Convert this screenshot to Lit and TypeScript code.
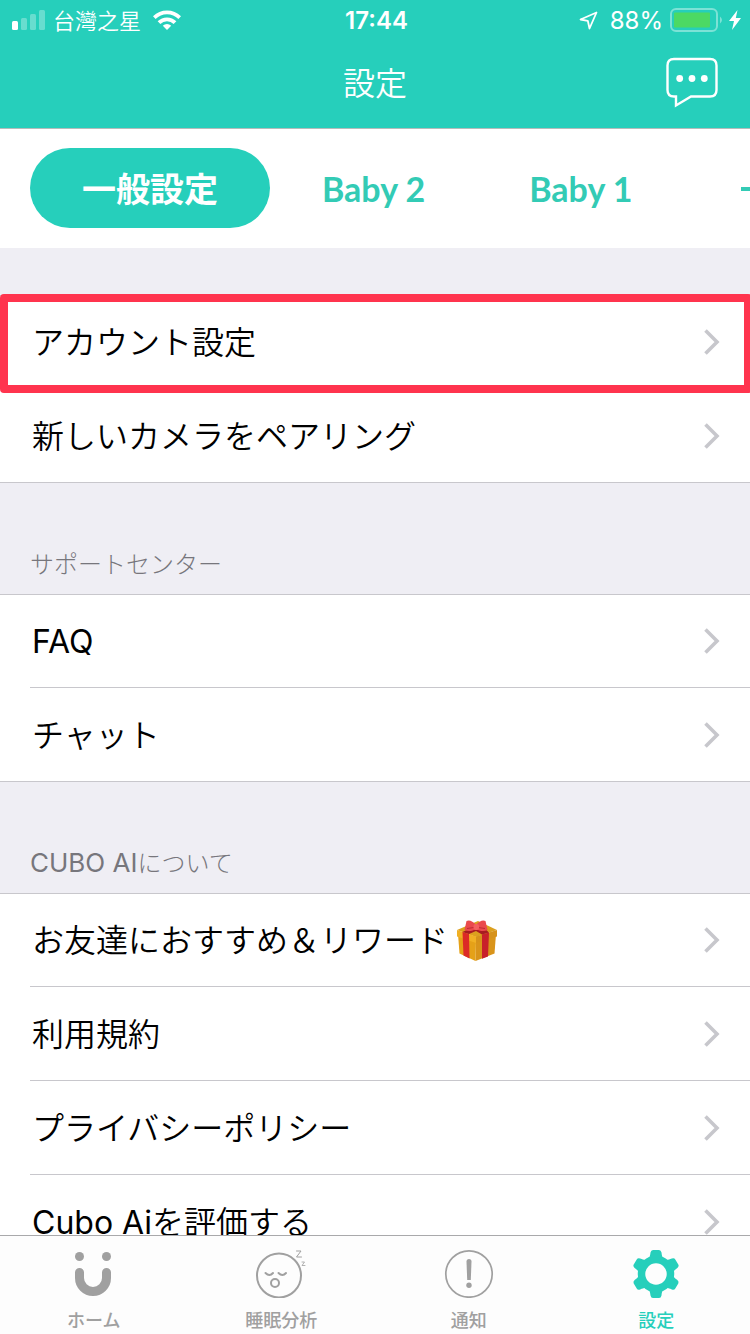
import { LitElement, html, css, svg, nothing } from "lit";
import { customElement, property, state } from "lit/decorators.js";

const gift = html`<svg class="gift" viewBox="0 0 42 42" role="img" aria-label="gift">
  <path d="M2 14 20 21 19.500 41 3.500 33.500Z" fill="#e5a118" />
  <path d="M20 21 40 14 38.500 33.500 19.500 41Z" fill="#d9941a" />
  <path d="M1 10 22 1 41 10 20 17Z" fill="#dca01f" />
  <path d="M1 10 20 16.500 V23 L1 16.500Z" fill="#f0b024" />
  <path d="M20 16.500 41 10 V16.500 L20 23Z" fill="#d6921b" />
  <path d="M6.500 12 13 14 13.500 38.500 7.500 35.500Z" fill="#dc2a26" />
  <path d="M26 14.500 33 12.500 32 36.500 26 38.800Z" fill="#c8202a" />
  <path d="M6.500 12 19 6 26 6 33 12.500 26 14.500 20 11 13 14Z" fill="#a81c20" />
  <path d="M20 5 C17 1 13 -0.500 10.500 1 C10 4 9 7 8.500 10 C12 12 17 11 20 9Z" fill="#ea4a4d" />
  <path d="M20 5 C23 1 27 -0.500 29.500 1 C30 4 31 7 31.500 10 C28 12 23 11 20 9Z" fill="#ea4a4d" />
  <path d="M11 8.500 18 7.500 M22 7.500 29 8.500" stroke="#c12a33" stroke-width="1" />
  <rect x="17.500" y="4" width="5.500" height="6" rx="2" fill="#f4615f" />
</svg>`;

const tooth = "M-8.500 -14 C-6 -17 -6 -18 -5.500 -21.500 Q-5 -24 -3 -24 H3 Q5 -24 5.500 -21.500 C6 -18 6 -17 8.500 -14Z";

const icons = {
  home: html`<svg class="icon" viewBox="0 0 60 52" aria-hidden="true">
    <circle cx="15.500" cy="10.500" r="4.500" fill="currentColor" />
    <circle cx="42.500" cy="10.500" r="4.500" fill="currentColor" />
    <path d="M15.500 26.500 V32 a13.500 13.500 0 0 0 27 0 V26.500" fill="none" stroke="currentColor" stroke-width="9" stroke-linecap="round" />
  </svg>`,
  sleep: html`<svg class="icon" viewBox="0 0 60 52" aria-hidden="true">
    <g fill="none" stroke="currentColor" stroke-width="2" stroke-linecap="round">
      <circle cx="28" cy="29.500" r="22" />
      <path d="M14.500 27 q4 4 7.500 0 M27.500 27 q4 4 7.500 0" />
      <circle cx="24" cy="37" r="4" />
      <path d="M45.500 5 H50 L45.500 11 H50.500" stroke-width="1" />
      <path d="M51 16 H53.500 L51 19.500 H54" stroke-width="0.800" />
    </g>
  </svg>`,
  alert: html`<svg class="icon" viewBox="0 0 60 52" aria-hidden="true">
    <circle cx="30" cy="28" r="23.200" fill="none" stroke="currentColor" stroke-width="1.700" />
    <path d="M27.500 15.500 q0 -2.500 2.500 -2.500 t2.500 2.500 L31.800 34 h-3.600Z" fill="currentColor" />
    <circle cx="30" cy="39.300" r="2.700" fill="currentColor" />
  </svg>`,
  gear: html`<svg class="icon" viewBox="0 0 60 52" aria-hidden="true">
    <g transform="translate(30 28)">
      <circle r="14.500" fill="none" stroke="currentColor" stroke-width="7.500" />
      ${[0, 60, 120, 180, 240, 300].map((a) => svg`<path d=${tooth} transform="rotate(${a})" fill="currentColor" />`)}
    </g>
  </svg>`,
};

/* Latin runs are set one step heavier than the kana and kanji beside them. */
const mixed = (text: string) =>
  text
    .split(/([A-Za-z][A-Za-z ]*)/)
    .filter(Boolean)
    .map((run) => (/^[A-Za-z]/.test(run) ? html`<span class="latin">${run}</span>` : run));

@customElement("settings-row")
export class SettingsRow extends LitElement {
  static styles = css`
    :host { display: block; position: relative; background: #fff; }
    .row {
      display: flex; align-items: center; box-sizing: border-box; height: 94px;
      padding: 2px 30px 0 32px; color: #000; text-decoration: none;
      font-size: 32px; line-height: 48px;
    }
    .label { flex: 1; display: flex; align-items: center; gap: 8px; white-space: nowrap; }
    .latin { font-weight: 400; }
    .gift { width: 42px; height: 42px; }
    .chevron { width: 18px; height: 30px; }
    .line { height: 1px; margin: -1px 0 0 30px; background: #c8c7cc; }
    .line.full { margin-left: 0; }
    .mark {
      position: absolute; z-index: 1; inset: -1px -2px -4px 0; pointer-events: none;
      border: 8px solid #ff344e; border-radius: 4px;
    }
  `;
  @property() label = "";
  @property({ type: Boolean }) gift = false;
  @property({ type: Boolean }) last = false;
  @property({ type: Boolean }) marked = false;

  render() {
    return html`
      <a class="row" href="#">
        <span class="label"><span>${mixed(this.label)}</span>${this.gift ? gift : nothing}</span>
        <svg class="chevron" viewBox="0 0 18 30" aria-hidden="true">
          <path d="M3.500 2.500 15 14 3.500 25.500" fill="none" stroke="#c7c7cc" stroke-width="3.600" />
        </svg>
      </a>
      <div class="line ${this.last ? "full" : ""}"></div>
      ${this.marked ? html`<div class="mark"></div>` : nothing}
    `;
  }
}

interface Row { label: string; gift?: boolean; marked?: boolean }
interface Section { title?: string; rows: Row[] }

const sections: Section[] = [
  { rows: [{ label: "アカウント設定", marked: true }, { label: "新しいカメラをペアリング" }] },
  { title: "サポートセンター", rows: [{ label: "FAQ" }, { label: "チャット" }] },
  {
    title: "CUBO AIについて",
    rows: [
      { label: "お友達におすすめ＆リワード", gift: true },
      { label: "利用規約" },
      { label: "プライバシーポリシー" },
      { label: "Cubo Aiを評価する" },
    ],
  },
];

const navItems = [
  { label: "ホーム", icon: icons.home },
  { label: "睡眠分析", icon: icons.sleep },
  { label: "通知", icon: icons.alert },
  { label: "設定", icon: icons.gear },
];

const tabs = ["一般設定", "Baby 2", "Baby 1"];

@customElement("app-root")
export class AppRoot extends LitElement {
  static styles = css`
    :host {
      display: flex; flex-direction: column; height: 100vh; overflow: hidden;
      background: #efeef4; color: #000;
      font-family: Inter, "Noto Sans CJK JP", sans-serif; font-weight: 350;
    }
    button { border: 0; padding: 0; background: none; font: inherit; color: inherit; cursor: pointer; }
    .top { background: #26cfbb; color: #fff; }
    .status {
      display: grid; grid-template-columns: 1fr auto 1fr; align-items: center;
      height: 40px; padding: 0 9px 0 12px; font-size: 24px; line-height: 32px;
    }
    .status svg { display: block; }
    .left, .right { display: flex; align-items: center; }
    .left { gap: 8px; }
    .right { justify-content: flex-end; gap: 7px; }
    .carrier { font-size: 22px; line-height: 30px; margin: 0 4px 2px 0; font-family: "Noto Sans CJK TC", sans-serif; }
    .time { font-weight: 600; padding-top: 2px; }
    .percent { font-weight: 400; margin-left: 5px; padding-top: 2px; }
    .bar { display: grid; grid-template-columns: 1fr auto 1fr; align-items: center; height: 88px; padding: 0 32px; }
    .title { grid-column: 2; margin: 0; font-size: 32px; line-height: 48px; font-weight: 350; }
    .chat { justify-self: end; height: 56px; }
    .chat svg { display: block; }
    .tabs {
      display: flex; box-sizing: border-box; height: 120px; flex: none; padding: 19px 0 20px 30px;
      border-top: 1px solid #b5bcbb; background: #fff; overflow: hidden;
    }
    .tab {
      flex: none; height: 80px; padding: 2px 52px 0; border-radius: 40px; color: #33cbb5;
      font-family: Lato, "Noto Sans CJK JP", sans-serif; font-size: 34px; font-weight: 700; line-height: 48px;
    }
    .tab.on { background: #26cfbb; color: #fff; }
    .tab.add { padding-top: 0; padding-left: 56px; }
    .tab svg { display: block; }
    .content { flex: 1; min-height: 0; overflow: hidden; }
    .group { border-top: 1px solid #c8c7cc; background: #fff; }
    .group settings-row:first-child { margin-top: -1px; background: none; }
    .heading {
      display: flex; align-items: flex-end; box-sizing: border-box; height: 111px; margin: 0;
      padding: 0 30px 11px; color: #77767c; font-size: 24px; line-height: 36px; font-weight: 300;
    }
    .heading.blank { height: 47px; }
    .latin { font-size: 26px; font-weight: 400; }
    .nav {
      display: grid; grid-template-columns: repeat(4, 1fr); flex: none; box-sizing: border-box; height: 99px;
      border-top: 1px solid #a9a9ab; background: #fdfdfd; font-family: "Noto Sans CJK JP", sans-serif;
    }
    .item {
      display: flex; flex-direction: column; align-items: center; padding-top: 10px;
      color: #a0a0a0; text-decoration: none; font-size: 18px; line-height: 24px; font-weight: 500; gap: 9px;
    }
    .item.on { color: #26cfbb; }
    .icon { width: 60px; height: 52px; }
  `;

  @state() private tab = 0;

  render() {
    return html`
      <header class="top">
        <div class="status">
          <div class="left">
            <svg width="33" height="20" viewBox="0 0 33 20" fill="#fff" aria-hidden="true">
              <rect y="11" width="6" height="9" rx="1.500" />
              <g opacity=".3">
                <rect x="9" y="8" width="6" height="12" rx="1.500" />
                <rect x="18" y="4" width="6" height="16" rx="1.500" />
                <rect x="27" width="6" height="20" rx="1.500" />
              </g>
            </svg>
            <span class="carrier">台灣之星</span>
            <svg width="28" height="20" viewBox="0 0 28 20" aria-hidden="true">
              <g fill="none" stroke="#fff" stroke-width="3.800">
                <path d="M1.300 7.600 a18 18 0 0 1 25.400 0" />
                <path d="M6 12.600 a11.300 11.300 0 0 1 16 0" />
              </g>
              <path d="M14 20 9.800 15.800 a6 6 0 0 1 8.400 0Z" fill="#fff" />
            </svg>
          </div>
          <span class="time">17:44</span>
          <div class="right">
            <svg width="19" height="19" viewBox="0 0 19 19" aria-hidden="true">
              <path d="M17.500 1.500 1.500 8.500 8.800 9.800 10.500 17.500Z" fill="none" stroke="#fff" stroke-width="1.800" stroke-linejoin="round" />
            </svg>
            <span class="percent">88%</span>
            <svg width="52" height="24" viewBox="0 0 52 24" aria-hidden="true">
              <rect x="1" y="1" width="46" height="22" rx="5" fill="none" stroke="#fff" stroke-opacity=".4" stroke-width="2" />
              <rect x="4" y="4.500" width="36" height="15" rx="1" fill="#4cd964" />
              <path d="M50 8.500 q4 3.500 0 7Z" fill="#fff" opacity=".4" />
            </svg>
            <svg width="12" height="20" viewBox="0 0 12 20" aria-hidden="true">
              <path d="M8.500 0 0 11 H5 L3 20 12 8 H6.800Z" fill="#fff" />
            </svg>
          </div>
        </div>
        <div class="bar">
          <h1 class="title">設定</h1>
          <button class="chat" aria-label="チャット">
            <svg width="52" height="56" viewBox="0 0 52 56">
              <path d="M8 3 H44 Q50.500 3 50.500 9.500 V34 Q50.500 40.500 44 40.500 H25 L10 49.500 V40.500 H8 Q1.500 40.500 1.500 34 V9.500 Q1.500 3 8 3Z" fill="none" stroke="#fff" stroke-width="2.400" />
              <g fill="#fff"><circle cx="13.700" cy="22.500" r="3.400" /><circle cx="26" cy="22.500" r="3.400" /><circle cx="38.300" cy="22.500" r="3.400" /></g>
            </svg>
          </button>
        </div>
      </header>
      <div class="tabs">
        ${tabs.map(
          (t, i) => html`<button class="tab ${this.tab === i ? "on" : ""}" @click=${() => (this.tab = i)}>${t}</button>`
        )}
        <button class="tab add" aria-label="追加">
          <svg width="26" height="26" viewBox="0 0 26 26"><path d="M0 14 H26 M13 1 V26" stroke="currentColor" stroke-width="4" /></svg>
        </button>
      </div>
      <main class="content">
        ${sections.map(
          (s) => html`
            ${s.title
              ? html`<h2 class="heading"><span>${mixed(s.title)}</span></h2>`
              : html`<div class="heading blank"></div>`}
            <div class="group">
              ${s.rows.map(
                (r, i) => html`<settings-row .label=${r.label} .gift=${!!r.gift} .marked=${!!r.marked}
                  .last=${i === s.rows.length - 1}></settings-row>`
              )}
            </div>
          `
        )}
      </main>
      <nav class="nav">
        ${navItems.map(
          (n, i) => html`<a class="item ${i === 3 ? "on" : ""}" href="#">${n.icon}<span>${n.label}</span></a>`
        )}
      </nav>
    `;
  }
}
